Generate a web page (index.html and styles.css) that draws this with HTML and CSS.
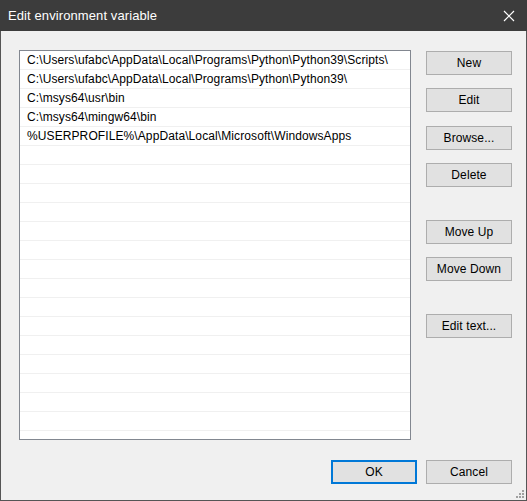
FILE: index.html
```html
<!DOCTYPE html>
<html lang="en">
<head>
    <meta charset="UTF-8">
    <title>Edit environment variable</title>
    <link rel="stylesheet" href="styles.css">
</head>
<body>
    <div class="window">
        <div class="titlebar">
            <span class="title">Edit environment variable</span>
            <svg class="close" width="12" height="12" viewBox="0 0 12 12">
                <path d="M1 1 L11 11 M11 1 L1 11" stroke="#fff" stroke-width="1.2" fill="none"/>
            </svg>
        </div>
        <div class="content">
            <div class="main">
                <div class="list">
                    <div class="row">C:\Users\ufabc\AppData\Local\Programs\Python\Python39\Scripts\</div>
                    <div class="row">C:\Users\ufabc\AppData\Local\Programs\Python\Python39\</div>
                    <div class="row">C:\msys64\usr\bin</div>
                    <div class="row">C:\msys64\mingw64\bin</div>
                    <div class="row">%USERPROFILE%\AppData\Local\Microsoft\WindowsApps</div>
                    <div class="row"></div>
                    <div class="row"></div>
                    <div class="row"></div>
                    <div class="row"></div>
                    <div class="row"></div>
                    <div class="row"></div>
                    <div class="row"></div>
                    <div class="row"></div>
                    <div class="row"></div>
                    <div class="row"></div>
                    <div class="row"></div>
                    <div class="row"></div>
                    <div class="row"></div>
                    <div class="row"></div>
                    <div class="row"></div>
                </div>
                <div class="side">
                    <button class="btn">New</button>
                    <button class="btn">Edit</button>
                    <button class="btn">Browse...</button>
                    <button class="btn">Delete</button>
                    <button class="btn gap-big">Move Up</button>
                    <button class="btn">Move Down</button>
                    <button class="btn gap-big">Edit text...</button>
                </div>
            </div>
            <div class="footer">
                <button class="btn default">OK</button>
                <button class="btn">Cancel</button>
            </div>
            <svg class="grip" width="9" height="9" viewBox="0 0 9 9">
                <rect x="7" y="1" width="2" height="2" fill="#a0a0a0"/>
                <rect x="4" y="4" width="2" height="2" fill="#a0a0a0"/>
                <rect x="7" y="4" width="2" height="2" fill="#a0a0a0"/>
                <rect x="1" y="7" width="2" height="2" fill="#a0a0a0"/>
                <rect x="4" y="7" width="2" height="2" fill="#a0a0a0"/>
                <rect x="7" y="7" width="2" height="2" fill="#a0a0a0"/>
            </svg>
        </div>
    </div>
</body>
</html>
```

FILE: styles.css
```css
html, body {
    margin: 0;
    padding: 0;
}
body {
    font-family: "Liberation Sans", Arial, sans-serif;
    font-size: 12px;
    letter-spacing: 0.1px;
    color: #000;
    background-color: #f0f0f0;
}
.window {
    width: 527px;
    height: 501px;
    box-sizing: border-box;
    border: 1px solid #555;
    border-top: none;
    display: flex;
    flex-direction: column;
    background-color: #f0f0f0;
}
.titlebar {
    height: 31px;
    background-color: #3c3c3c;
    color: #fff;
    display: flex;
    align-items: center;
    justify-content: space-between;
    padding: 0 10px 0 8px;
    margin: 0 -1px;
}
.title {
    font-size: 13px;
    padding-bottom: 1px;
}
.close {
    margin-right: 2px;
}
.content {
    flex: 1;
    position: relative;
    padding: 19px 14px 0 18px;
}
.main {
    display: flex;
    gap: 15px;
}
.list {
    width: 392px;
    height: 390px;
    box-sizing: border-box;
    border: 1px solid #828790;
    background-color: #fff;
    overflow: hidden;
}
.row {
    height: 19px;
    box-sizing: border-box;
    border-bottom: 1px solid #f0f0f0;
    padding-left: 7px;
    line-height: 18px;
    white-space: nowrap;
}
.side {
    display: flex;
    flex-direction: column;
    gap: 13px;
    padding-top: 1px;
}
.btn {
    width: 86px;
    height: 24px;
    box-sizing: border-box;
    border: 1px solid #adadad;
    background-color: #e1e1e1;
    font-family: inherit;
    font-size: 12px;
    letter-spacing: 0.1px;
    color: #000;
    padding: 0;
}
.side .btn:nth-child(3) {
    margin-top: 1px;
}
.side .gap-big {
    margin-top: 20px;
}
.footer {
    display: flex;
    justify-content: flex-end;
    gap: 9px;
    margin-top: 20px;
}
.btn.default {
    border: 2px solid #0078d7;
}
.grip {
    position: absolute;
    right: 2px;
    bottom: 2px;
}
```
